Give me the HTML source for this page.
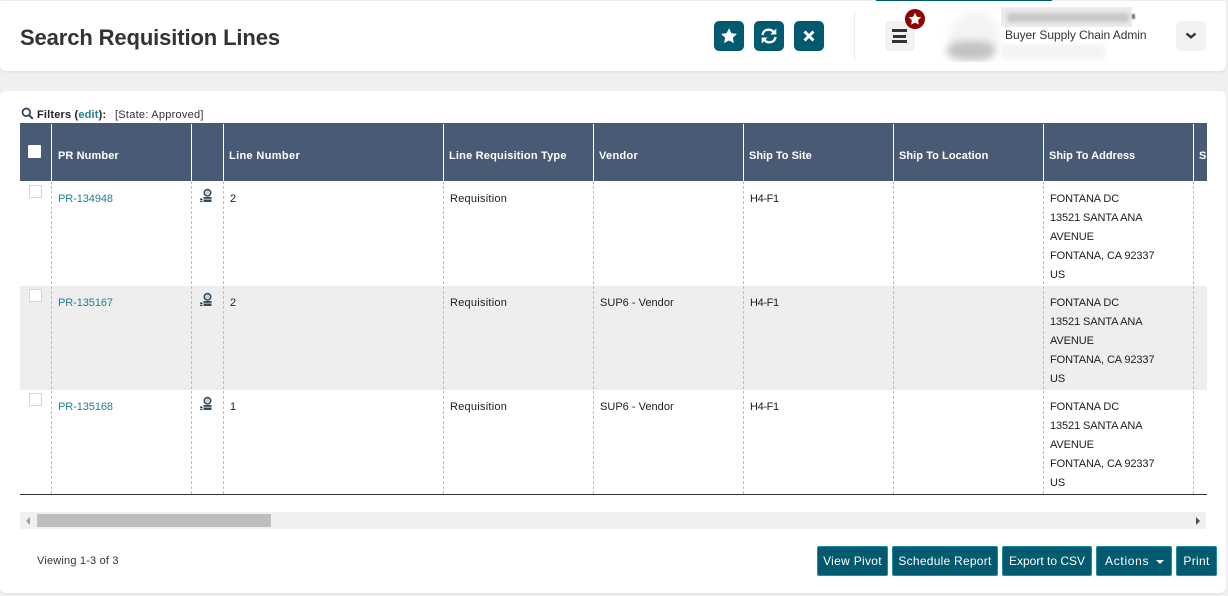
<!DOCTYPE html>
<html><head><meta charset="utf-8">
<style>
*{box-sizing:border-box}
html,body{margin:0;padding:0;width:1228px;height:596px;overflow:hidden;background:#f0f0f0;font-family:"Liberation Sans",sans-serif;color:#222}
.a{position:absolute}
.t{position:absolute;white-space:nowrap;font-size:11px;line-height:14px;letter-spacing:.25px;color:#1c1c1c}
.h{position:absolute;white-space:nowrap;font-size:11px;line-height:14px;font-weight:bold;color:#fff;top:149px}
.l{color:#1f7f96;letter-spacing:-.08px}
.v{letter-spacing:.02px}
.s{letter-spacing:-.35px}
.ib{position:absolute;top:21px;width:30px;height:30px;border-radius:5px;background:#015a6f}
.cb{position:absolute;left:29px;width:13px;height:13px;background:#fff;border:1px solid #d5d5d5}
.dl{position:absolute;top:181px;height:313px;width:0;border-left:1px dashed #bdbdbd}
.wl{position:absolute;top:124px;height:57px;width:1px;background:#fff}
.btn{position:absolute;top:546px;height:30px;background:#015a6f;border:1px solid #1d8ea6;border-radius:2px;color:#fff;font-size:12px;line-height:29px;text-align:center;white-space:nowrap;letter-spacing:.3px}
.addr{line-height:19px;white-space:normal;letter-spacing:-.1px}
svg{display:block}
</style></head><body>
<!-- header -->
<div class="a" style="left:0;top:1px;width:1226px;height:70px;background:#fff;border-radius:0 0 6px 6px;box-shadow:0 1px 3px rgba(0,0,0,.08)"></div>
<div class="a" style="left:876px;top:0;width:176px;height:1px;background:#015a6f"></div>
<div class="a" style="left:20px;top:24px;font-size:22px;line-height:28px;font-weight:bold;color:#333;white-space:nowrap;letter-spacing:-.12px">Search Requisition Lines</div>

<div class="ib" style="left:714px"><svg width="30" height="30" viewBox="0 0 30 30"><path d="M15 7.200l2.400 5 5.500.7-4 3.800 1 5.400-4.900-2.600-4.900 2.600 1-5.400-4-3.800 5.500-.7z" fill="#fff"/></svg></div>
<div class="ib" style="left:754px"><svg width="30" height="30" viewBox="0 0 30 30"><path d="M8.500 14c.4-3.400 3-5.300 6.300-5.300 2 0 3.600.8 4.700 2.300M21.500 16c-.4 3.400-3 5.300-6.300 5.300-2 0-3.600-.8-4.700-2.300" fill="none" stroke="#fff" stroke-width="2.400"/><path d="M22.300 7.500v6h-6zM7.700 22.500v-6h6z" fill="#fff"/></svg></div>
<div class="ib" style="left:794px"><svg width="30" height="30" viewBox="0 0 30 30"><path d="M10.500 10.500l9 9M19.500 10.500l-9 9" stroke="#fff" stroke-width="3"/></svg></div>

<div class="a" style="left:854px;top:11px;width:1px;height:50px;background:#eee"></div>
<div class="a" style="left:885px;top:21px;width:30px;height:30px;border-radius:5px;background:#f2f2f2"></div>
<div class="a" style="left:892px;top:29px;width:15px;height:3px;background:#333"></div>
<div class="a" style="left:893px;top:35px;width:13px;height:3px;background:#333"></div>
<div class="a" style="left:892px;top:40px;width:15px;height:3px;background:#333"></div>
<div class="a" style="left:905px;top:9px;width:20px;height:20px;border-radius:50%;background:#8f0202"><svg width="20" height="20" viewBox="0 0 20 20"><path d="M10 3.800l1.900 3.900 4.300.6-3.100 3 .7 4.300-3.800-2-3.800 2 .7-4.300-3.100-3 4.300-.6z" fill="#fff"/></svg></div>

<!-- blurred avatar / name -->
<div class="a" style="left:940px;top:8px;width:61px;height:54px;overflow:hidden">
  <div class="a" style="left:10px;top:4px;width:50px;height:46px;border-radius:50%;background:#f4f4f4;filter:blur(4px)"></div>
  <div class="a" style="left:7px;top:33px;width:48px;height:19px;border-radius:40%;background:#c2c2c2;filter:blur(4px)"></div>
</div>
<div class="a" style="left:1001px;top:7px;width:131px;height:20px;background:#ececec"></div>
<div class="a" style="left:1007px;top:13px;width:122px;height:9px;background:#c6c6c6;filter:blur(2.500px)"></div>
<div class="a" style="left:1132px;top:14px;width:3px;height:5px;background:#777;filter:blur(.5px)"></div>
<div class="a" style="left:1001px;top:44px;width:104px;height:15px;background:#f3f3f3;filter:blur(2px)"></div>
<div class="t" style="left:1005px;top:28px;font-size:12px;letter-spacing:-.05px;line-height:15px;color:#333">Buyer Supply Chain Admin</div>
<div class="a" style="left:1176px;top:21px;width:30px;height:30px;border-radius:5px;background:#f2f2f2"><svg width="30" height="30" viewBox="0 0 30 30"><path d="M10.500 12.500l4.500 3.800 4.500-3.800" fill="none" stroke="#333" stroke-width="2.400"/></svg></div>

<!-- card -->
<div class="a" style="left:0;top:91px;width:1226px;height:502px;background:#fff;border-radius:6px;box-shadow:0 1px 2px rgba(0,0,0,.06)"></div>

<!-- filters -->
<div class="a" style="left:21px;top:107px"><svg width="13" height="13" viewBox="0 0 13 13"><circle cx="5.300" cy="5.300" r="3.800" fill="none" stroke="#2e4257" stroke-width="1.700"/><path d="M8.200 8.200l3.600 3.600" stroke="#2e4257" stroke-width="2"/></svg></div>
<div class="t" style="left:37px;top:108px;font-weight:bold;letter-spacing:.18px;color:#222">Filters (<span style="color:#1f7f96">edit</span>):</div>
<div class="t" style="left:115px;top:108px;color:#333">[State: Approved]</div>

<!-- table -->
<div class="a" style="left:20px;top:123px;width:1187px;height:58px;background:#495b74"></div>
<div class="a" style="left:20px;top:286px;width:1187px;height:104px;background:#eee"></div>
<div class="a" style="left:20px;top:494px;width:1187px;height:1px;background:#333"></div>

<div class="wl" style="left:51px"></div><div class="wl" style="left:191px"></div><div class="wl" style="left:223px"></div><div class="wl" style="left:443px"></div><div class="wl" style="left:593px"></div><div class="wl" style="left:743px"></div><div class="wl" style="left:893px"></div><div class="wl" style="left:1043px"></div><div class="wl" style="left:1193px"></div>
<div class="dl" style="left:51px"></div><div class="dl" style="left:191px"></div><div class="dl" style="left:223px"></div><div class="dl" style="left:443px"></div><div class="dl" style="left:593px"></div><div class="dl" style="left:743px"></div><div class="dl" style="left:893px"></div><div class="dl" style="left:1043px"></div><div class="dl" style="left:1193px"></div>

<div class="a" style="left:28px;top:145px;width:13px;height:13px;background:#fff;border-radius:1px"></div>
<div class="h" style="left:58px;letter-spacing:.1px">PR Number</div>
<div class="h" style="left:229px;letter-spacing:.35px">Line Number</div>
<div class="h" style="left:449px;letter-spacing:.2px">Line Requisition Type</div>
<div class="h" style="left:599px;letter-spacing:.3px">Vendor</div>
<div class="h" style="left:749px">Ship To Site</div>
<div class="h" style="left:899px;letter-spacing:.06px">Ship To Location</div>
<div class="h" style="left:1049px">Ship To Address</div>
<div class="h" style="left:1199px;width:8px;overflow:hidden">S</div>

<!-- row 1 -->
<div class="cb" style="top:185px"></div>
<div class="t l" style="left:58px;top:192px">PR-134948</div>
<svg class="a" style="left:199px;top:188px" width="14" height="16" viewBox="0 0 14 16"><circle cx="8.500" cy="4.800" r="3.300" fill="#c8d2d8" stroke="#2e4a5c" stroke-width="1.400"/><rect x="4.500" y="9" width="8" height="1.800" fill="#2e4a5c"/><rect x="4.500" y="11.500" width="8" height="2.500" fill="#2e4a5c"/><rect x="1" y="10.500" width="2.500" height="1.500" fill="#2e4a5c"/><rect x="1" y="12.700" width="2.500" height="1.300" fill="#2e4a5c"/></svg>
<div class="t" style="left:230px;top:192px">2</div>
<div class="t" style="left:450px;top:192px">Requisition</div>
<div class="t s" style="left:750px;top:192px">H4-F1</div>
<div class="t addr" style="left:1050px;top:190px;width:130px">FONTANA DC<br>13521 SANTA ANA<br>AVENUE<br>FONTANA, CA 92337<br>US</div>

<!-- row 2 -->
<div class="cb" style="top:289px"></div>
<div class="t l" style="left:58px;top:296px">PR-135167</div>
<svg class="a" style="left:199px;top:292px" width="14" height="16" viewBox="0 0 14 16"><circle cx="8.500" cy="4.800" r="3.300" fill="#c8d2d8" stroke="#2e4a5c" stroke-width="1.400"/><rect x="4.500" y="9" width="8" height="1.800" fill="#2e4a5c"/><rect x="4.500" y="11.500" width="8" height="2.500" fill="#2e4a5c"/><rect x="1" y="10.500" width="2.500" height="1.500" fill="#2e4a5c"/><rect x="1" y="12.700" width="2.500" height="1.300" fill="#2e4a5c"/></svg>
<div class="t" style="left:230px;top:296px">2</div>
<div class="t" style="left:450px;top:296px">Requisition</div>
<div class="t v" style="left:600px;top:296px">SUP6 - Vendor</div>
<div class="t s" style="left:750px;top:296px">H4-F1</div>
<div class="t addr" style="left:1050px;top:294px;width:130px">FONTANA DC<br>13521 SANTA ANA<br>AVENUE<br>FONTANA, CA 92337<br>US</div>

<!-- row 3 -->
<div class="cb" style="top:393px"></div>
<div class="t l" style="left:58px;top:400px">PR-135168</div>
<svg class="a" style="left:199px;top:396px" width="14" height="16" viewBox="0 0 14 16"><circle cx="8.500" cy="4.800" r="3.300" fill="#c8d2d8" stroke="#2e4a5c" stroke-width="1.400"/><rect x="4.500" y="9" width="8" height="1.800" fill="#2e4a5c"/><rect x="4.500" y="11.500" width="8" height="2.500" fill="#2e4a5c"/><rect x="1" y="10.500" width="2.500" height="1.500" fill="#2e4a5c"/><rect x="1" y="12.700" width="2.500" height="1.300" fill="#2e4a5c"/></svg>
<div class="t" style="left:230px;top:400px">1</div>
<div class="t" style="left:450px;top:400px">Requisition</div>
<div class="t v" style="left:600px;top:400px">SUP6 - Vendor</div>
<div class="t s" style="left:750px;top:400px">H4-F1</div>
<div class="t addr" style="left:1050px;top:398px;width:130px">FONTANA DC<br>13521 SANTA ANA<br>AVENUE<br>FONTANA, CA 92337<br>US</div>

<!-- scrollbar -->
<div class="a" style="left:20px;top:512px;width:1186px;height:17px;background:#f0f0f0"></div>
<div class="a" style="left:37px;top:514px;width:234px;height:13px;background:#bebebe"></div>
<svg class="a" style="left:25px;top:517px" width="6" height="8" viewBox="0 0 6 8"><path d="M5 0v8L1 4z" fill="#a0a0a0"/></svg>
<svg class="a" style="left:1195px;top:517px" width="6" height="8" viewBox="0 0 6 8"><path d="M1 0v8l4-4z" fill="#505050"/></svg>

<!-- footer -->
<div class="t" style="left:37px;top:554px;color:#333;letter-spacing:.19px">Viewing 1-3 of 3</div>
<div class="btn" style="left:817px;width:71px">View Pivot</div>
<div class="btn" style="left:892px;width:106px;letter-spacing:.25px">Schedule Report</div>
<div class="btn" style="left:1002px;width:90px;letter-spacing:0">Export to CSV</div>
<div class="btn" style="left:1096px;width:76px;text-align:left;padding-left:8px;letter-spacing:.7px">Actions</div>
<svg class="a" style="left:1156px;top:560px" width="8" height="4" viewBox="0 0 8 4"><path d="M0 0h8L4 4z" fill="#fff"/></svg>
<div class="btn" style="left:1176px;width:41px">Print</div>
</body></html>
